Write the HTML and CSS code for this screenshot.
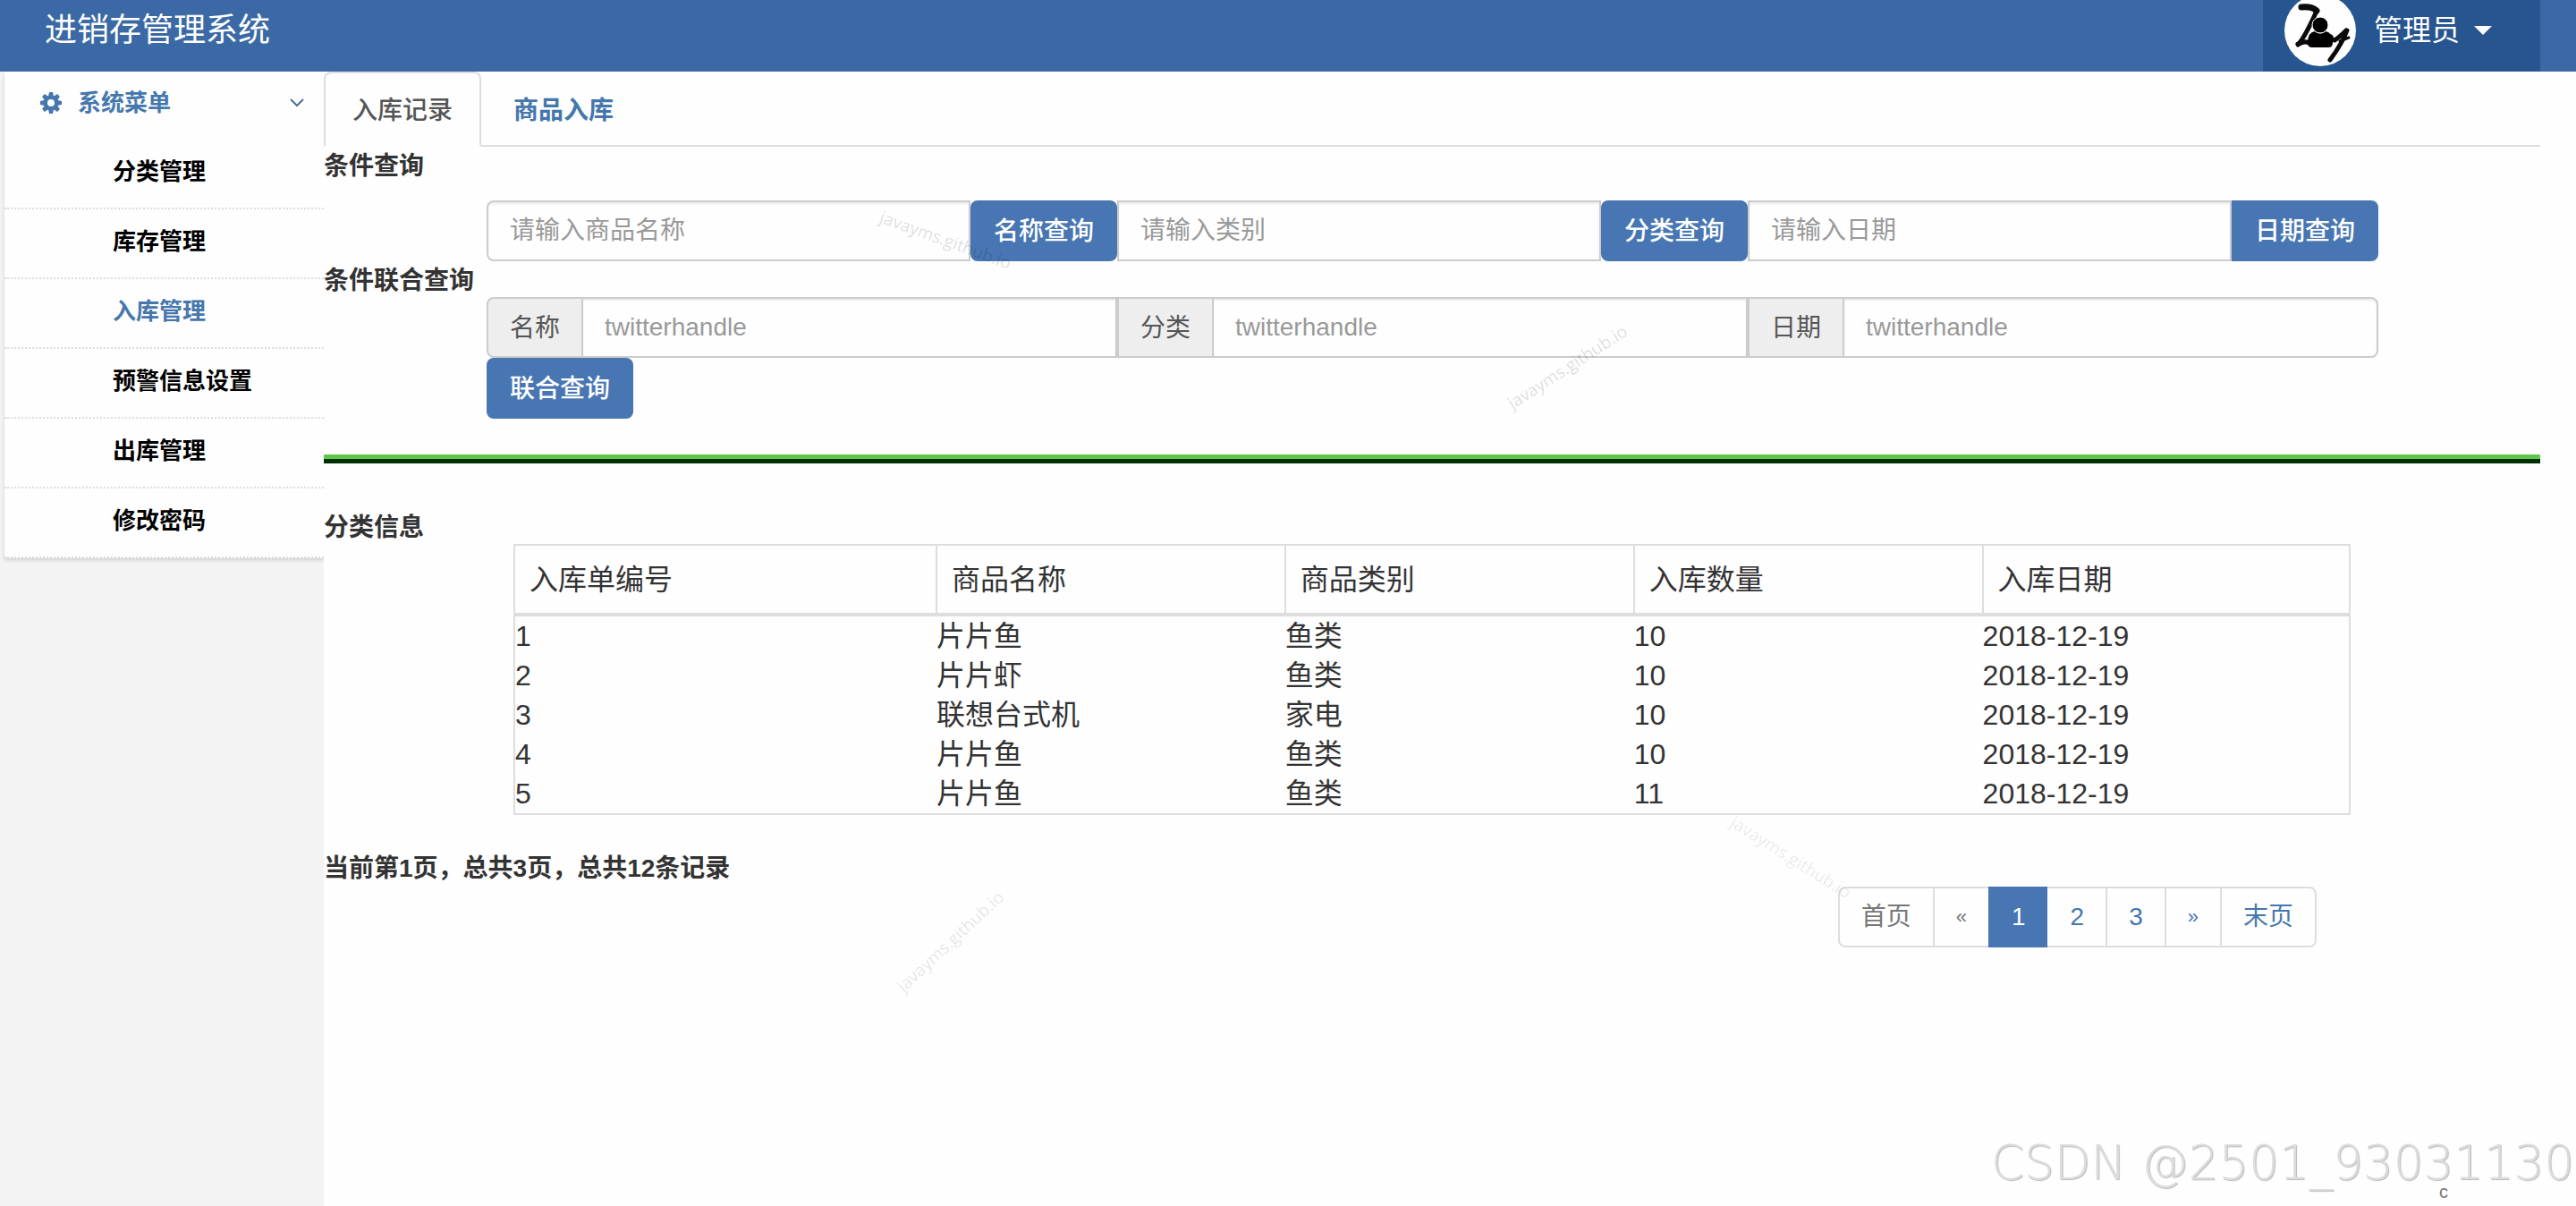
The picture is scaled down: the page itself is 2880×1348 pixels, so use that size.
FILE: index.html
```html
<!DOCTYPE html>
<html lang="zh-CN">
<head>
<meta charset="utf-8">
<title>进销存管理系统</title>
<link rel="stylesheet" href="styles.css">
</head>
<body>
<header class="topbar">
  <a class="brand" href="#">进销存管理系统</a>
  <button class="user" type="button">
    <svg class="avatar" viewBox="0 0 80 80" aria-hidden="true">
      <circle cx="40" cy="40" r="40" fill="#fefefe"/>
      <g fill="none" stroke="#0a0a0a" stroke-linecap="round" stroke-linejoin="round">
        <path d="M19 14Q31 13 36 18" stroke-width="7"/>
        <path d="M36 18Q32 28 25 41T15 55" stroke-width="5"/>
        <path d="M15 56Q21 51 28 54" stroke-width="5"/>
        <path d="M52 47Q53 51 56 51Q61 48 69 40" stroke-width="5"/>
        <path d="M70 40Q65 54 51 73" stroke-width="5"/>
        <path d="M62 52L72 48" stroke-width="3"/>
      </g>
      <path d="M26 54Q26 42 34 41Q40 46 46 41Q54 42 54 54Q54 59 49 59H31Q26 59 26 54Z" fill="#000"/>
      <circle cx="40" cy="34" r="9" fill="#000" stroke="#fff" stroke-width="1"/>
    </svg>
    <span>管理员</span>
    <span class="caret"></span>
  </button>
</header>

<div class="layout">
  <aside class="sidebar">
    <nav class="menu">
      <a class="menu-title" href="#">
        <svg class="gear" viewBox="0 0 24 24" aria-hidden="true">
          <g fill="#4577ad">
            <path fill-rule="evenodd" d="M12 3.500a8.500 8.500 0 1 0 0 17a8.500 8.500 0 1 0 0-17ZM12 8a4 4 0 1 1 0 8a4 4 0 1 1 0-8Z"/>
            <path id="tooth" d="M10 0h4l1 5h-6z"/>
            <use href="#tooth" transform="rotate(45 12 12)"/>
            <use href="#tooth" transform="rotate(90 12 12)"/>
            <use href="#tooth" transform="rotate(135 12 12)"/>
            <use href="#tooth" transform="rotate(180 12 12)"/>
            <use href="#tooth" transform="rotate(225 12 12)"/>
            <use href="#tooth" transform="rotate(270 12 12)"/>
            <use href="#tooth" transform="rotate(315 12 12)"/>
          </g>
        </svg>
        <span>系统菜单</span>
        <svg class="chevron" viewBox="0 0 16 10" aria-hidden="true"><path d="M1 1l7 7l7-7" fill="none" stroke="#4c6f97" stroke-width="2"/></svg>
      </a>
      <ul class="menu-list">
        <li><a href="#">分类管理</a></li>
        <li><a href="#">库存管理</a></li>
        <li><a class="current" href="#">入库管理</a></li>
        <li><a href="#">预警信息设置</a></li>
        <li><a href="#">出库管理</a></li>
        <li><a href="#">修改密码</a></li>
      </ul>
    </nav>
  </aside>

  <main class="main">
    <nav class="tabs">
      <a class="tab active" href="#">入库记录</a>
      <a class="tab" href="#">商品入库</a>
    </nav>

    <h2 class="label">条件查询</h2>
    <form class="query">
      <div class="group search">
        <input type="text" placeholder="请输入商品名称" aria-label="商品名称">
        <button class="btn" type="button">名称查询</button>
        <input type="text" placeholder="请输入类别" aria-label="类别">
        <button class="btn" type="button">分类查询</button>
        <input type="text" placeholder="请输入日期" aria-label="日期">
        <button class="btn" type="button">日期查询</button>
      </div>
    </form>

    <h2 class="label">条件联合查询</h2>
    <form class="query">
      <div class="group">
        <label class="addon" for="name">名称</label>
        <input type="text" id="name" placeholder="twitterhandle">
        <label class="addon" for="kind">分类</label>
        <input type="text" id="kind" placeholder="twitterhandle">
        <label class="addon" for="date">日期</label>
        <input type="text" id="date" placeholder="twitterhandle">
      </div>
      <button class="btn" type="button">联合查询</button>
    </form>

    <hr class="rule">

    <h2 class="label">分类信息</h2>
    <div class="records">
      <table class="table">
        <thead>
          <tr><th class="col-id">入库单编号</th><th>商品名称</th><th>商品类别</th><th>入库数量</th><th class="col-date">入库日期</th></tr>
        </thead>
        <tbody>
          <tr><td>1</td><td>片片鱼</td><td>鱼类</td><td>10</td><td>2018-12-19</td></tr>
          <tr><td>2</td><td>片片虾</td><td>鱼类</td><td>10</td><td>2018-12-19</td></tr>
          <tr><td>3</td><td>联想台式机</td><td>家电</td><td>10</td><td>2018-12-19</td></tr>
          <tr><td>4</td><td>片片鱼</td><td>鱼类</td><td>10</td><td>2018-12-19</td></tr>
          <tr><td>5</td><td>片片鱼</td><td>鱼类</td><td>11</td><td>2018-12-19</td></tr>
        </tbody>
      </table>
    </div>

    <p class="summary">当前第1页，总共3页，总共12条记录</p>
    <nav class="pager" aria-label="分页">
      <a class="off" href="#">首页</a>
      <a class="off arrow" href="#">«</a>
      <a class="on" href="#">1</a>
      <a href="#">2</a>
      <a href="#">3</a>
      <a class="arrow" href="#">»</a>
      <a href="#">末页</a>
    </nav>
    <footer class="foot">c</footer>
  </main>
</div>

<div class="mark mark-a">javayms.github.io</div>
<div class="mark mark-b">javayms.github.io</div>
<div class="mark mark-c">javayms.github.io</div>
<div class="mark mark-d">javayms.github.io</div>
<div class="credit">CSDN @2501_93031130</div>
</body>
</html>
```

FILE: styles.css
```css
* {
  box-sizing: border-box;
}

body {
  margin: 0;
  min-height: 100vh;
  position: relative;
  display: flex;
  flex-direction: column;
  overflow-x: hidden;
  background: #fefefe;
  color: #333;
  font-family: "Liberation Sans", "Noto Sans CJK SC", sans-serif;
  font-size: 28px;
  line-height: 40px;
}

a {
  color: #4577ad;
  text-decoration: none;
}

input,
button {
  font: inherit;
}

/* top bar */
.topbar {
  height: 80px;
  display: flex;
  justify-content: space-between;
  padding-right: 40px;
  overflow: hidden;
  background: #3b69a5;
}

.brand {
  padding-left: 50px;
  color: #fff;
  font-size: 36px;
  line-height: 68px;
}

.user {
  width: 310px;
  display: flex;
  align-items: center;
  padding: 0 24px 12px;
  border: 0;
  background: #27558f;
  color: #fff;
  font-size: 32px;
}

.avatar {
  width: 80px;
  height: 80px;
  flex: none;
  margin-right: 20px;
}

.caret {
  margin-left: 16px;
  border: 10px solid transparent;
  border-top-color: #fff;
  border-bottom: 0;
}

/* page body */
.layout {
  flex: 1;
  display: grid;
  grid-template-columns: 362px minmax(0, 1fr);
}

.sidebar {
  padding-left: 5px;
  background: #f3f3f3;
}

.menu {
  background: #fefefe;
  box-shadow: 0 2px 4px rgba(0, 0, 0, 0.15);
  font-size: 26px;
  font-weight: bold;
}

.menu-title {
  display: flex;
  align-items: center;
  height: 76px;
  padding: 0 22px 6px 40px;
}

.gear {
  width: 24px;
  height: 24px;
  margin-right: 18px;
}

.chevron {
  width: 16px;
  height: 10px;
  margin-left: auto;
}

.menu-list {
  margin: 0;
  padding: 0;
  list-style: none;
}

.menu-list li {
  height: 78px;
  padding: 16px 0 0 121px;
  border-bottom: 2px dotted #ddd;
}

.menu-list a {
  display: block;
  color: #000;
}

.menu-list .current {
  color: #4577ad;
}

.main {
  position: relative;
  display: flex;
  flex-direction: column;
  padding-right: 40px;
  background: #fefefe;
}

.tabs {
  display: flex;
  height: 84px;
  border-bottom: 2px solid #ddd;
}

.tab {
  height: 84px;
  padding: 24px 30px;
  border: 2px solid transparent;
  line-height: 36px;
  font-weight: bold;
}

.tab.active {
  margin-right: 4px;
  border-color: #ddd;
  border-bottom-color: #fefefe;
  border-radius: 8px 8px 0 0;
  background: #fefefe;
  color: #555;
  font-weight: 500;
}

.label {
  height: 40px;
  margin: 0;
  font-size: 28px;
  font-weight: bold;
  line-height: 44px;
}

/* query forms */
.query {
  margin: 0 181px 0 182px;
}

.group {
  display: flex;
}

.search {
  margin-top: 20px;
}

.group input {
  flex: 1;
  min-width: 0;
  height: 68px;
  padding: 0 24px;
  border: 2px solid #ccc;
  border-radius: 0;
  background: #fefefe;
  box-shadow: inset 0 2px 2px rgba(0, 0, 0, 0.075);
  color: #555;
}

.group input::placeholder {
  color: #999;
  opacity: 1;
}

.search input:first-child,
.addon:first-child {
  border-radius: 8px 0 0 8px;
}

.group input:last-child {
  border-radius: 0 8px 8px 0;
}

.btn {
  height: 68px;
  padding: 2px 26px 0;
  border: 0;
  border-radius: 8px;
  background: #4876b2;
  color: #fff;
  font-weight: 500;
}

.search .btn:last-child {
  border-radius: 0 8px 8px 0;
}

.addon {
  height: 68px;
  padding: 13px 24px 0;
  border: 2px solid #ccc;
  border-right: 0;
  background: #eee;
  color: #555;
}

.rule {
  width: 100%;
  height: 10px;
  margin: 40px 0 50px;
  border: 0;
  border-top: 5px solid #60c64a;
  background: #003000;
}

/* records */
.records {
  margin: 0 212px;
}

.table {
  width: 100%;
  border: 2px solid #ddd;
  border-collapse: collapse;
  table-layout: fixed;
  font-size: 32px;
  line-height: 44px;
}

.table th {
  width: 19%;
  height: 78px;
  padding: 0 16px;
  border: 2px solid #ddd;
  border-bottom-width: 4px;
  font-weight: normal;
  text-align: left;
}

.table .col-id {
  width: 23%;
}

.table .col-date {
  width: 20%;
}

.table td {
  height: 44px;
  padding: 0;
}

.summary {
  margin: 40px 0 0;
  font-weight: bold;
}

.pager {
  display: flex;
  align-self: flex-end;
  margin-right: 250px;
  border: 2px solid #ddd;
  border-radius: 8px;
}

.pager a {
  height: 64px;
  padding: 12px 24px;
  border-left: 2px solid #ddd;
}

.pager a:first-child {
  border-left: 0;
}

.pager .off {
  color: #777;
}

.pager .arrow {
  font-size: 22px;
}

.pager .on {
  height: 68px;
  margin: -2px 0;
  padding: 14px 24px;
  border-color: #4876b2;
  background: #4876b2;
  color: #fff;
}

.pager .on + a {
  border-color: transparent;
}

.foot {
  margin-top: auto;
  padding: 0 103px 6px 0;
  color: #777;
  font-size: 20px;
  line-height: 20px;
  text-align: right;
}

/* watermarks over the page */
.mark {
  position: absolute;
  color: rgba(0, 0, 0, 0.14);
  font-family: "Open Sans", sans-serif;
  font-size: 19px;
  line-height: 24px;
  white-space: nowrap;
  pointer-events: none;
}

.mark-a {
  top: 256px;
  left: 980px;
  transform: rotate(20deg);
}

.mark-b {
  top: 398px;
  left: 1675px;
  transform: rotate(-33deg);
}

.mark-c {
  top: 946px;
  left: 1925px;
  color: rgba(0, 0, 0, 0.09);
  transform: rotate(32deg);
}

.mark-d {
  top: 1040px;
  left: 985px;
  color: rgba(0, 0, 0, 0.11);
  transform: rotate(-43deg);
}

.credit {
  position: absolute;
  right: 2px;
  bottom: 30px;
  color: #dcdcdc;
  font-family: "DejaVu Sans Light", "DejaVu Sans", sans-serif;
  font-size: 53px;
  font-weight: 200;
  line-height: 36px;
  text-shadow: 1px 1px 1px #bbb;
  white-space: nowrap;
  pointer-events: none;
}
```
